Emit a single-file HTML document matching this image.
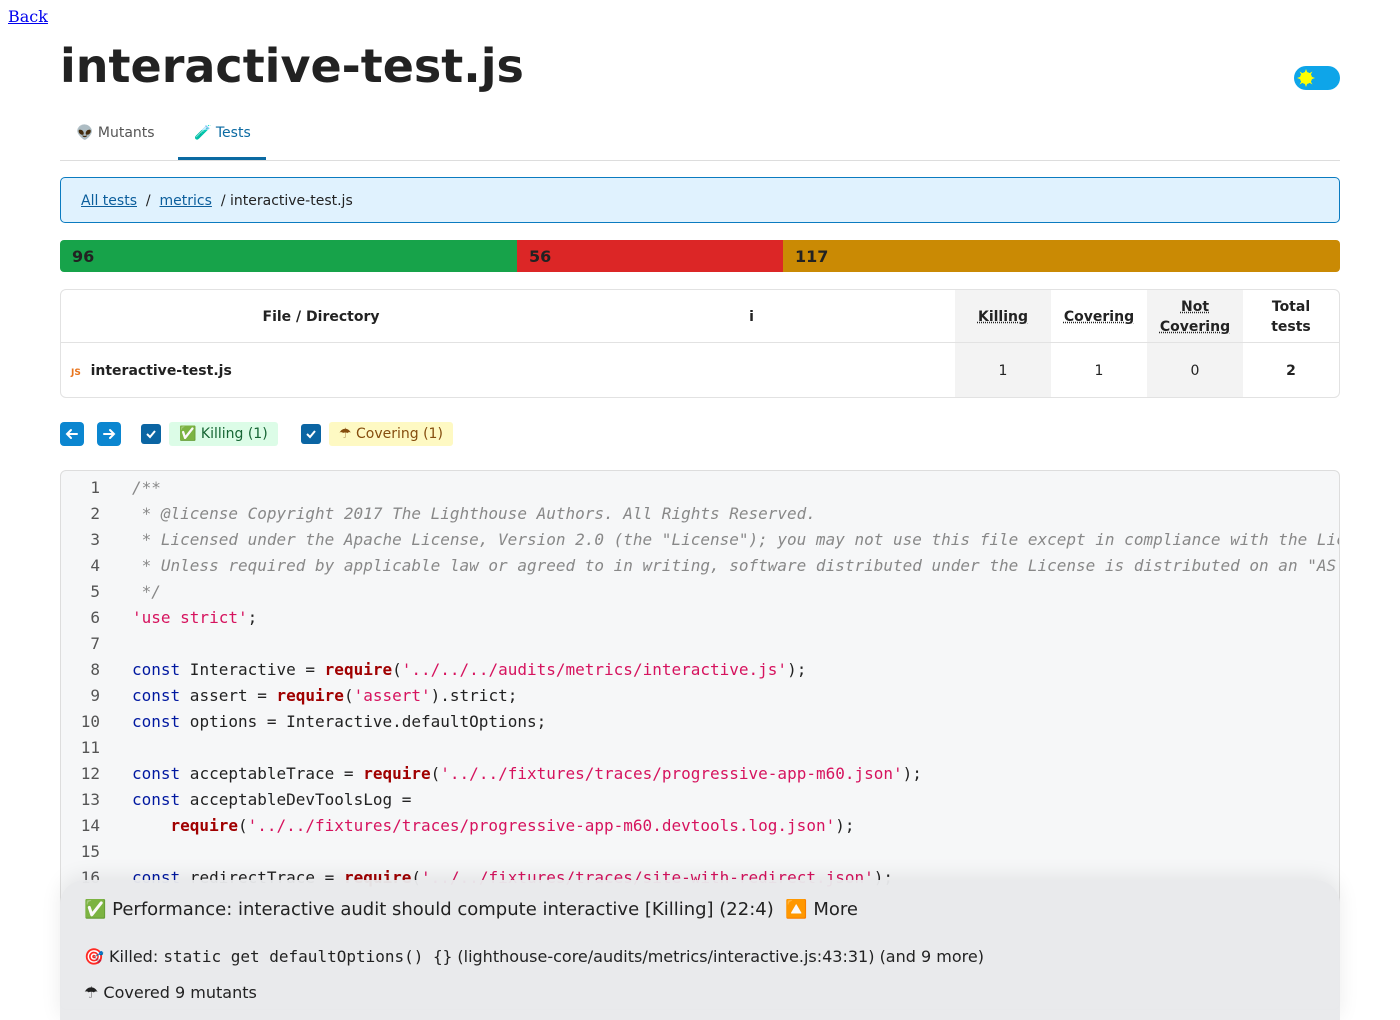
<!DOCTYPE html>
<html><head><meta charset="utf-8"><style>
*{box-sizing:border-box}
body{margin:0;font-family:"DejaVu Sans","Liberation Sans",sans-serif;color:#222;background:#fff;width:1400px;height:1000px;overflow:hidden;position:relative}
a{color:#0b5e9c}
.back{position:absolute;left:8px;top:7px;font-family:"DejaVu Serif","Liberation Serif",serif;font-size:16px;color:#00e}
h1{position:absolute;left:60px;top:39px;margin:0;font-size:46px;font-weight:bold;color:#222}
.toggle{position:absolute;left:1294px;top:66px;width:46px;height:24px;border-radius:12px;background:#0ea5e9}
.sun{position:absolute;left:3px;top:3px;width:18px;height:18px}
.tabs{position:absolute;left:60px;top:110px;width:1280px;height:51px;border-bottom:1px solid #ddd;font-size:14px}
.tab{position:absolute;top:15px}
.tabline{position:absolute;left:118px;top:47px;width:88px;height:3px;background:#0b6aa2}
.bc{position:absolute;left:60px;top:177px;width:1280px;height:46px;border:1px solid #0b7bc0;border-radius:5px;background:#e0f2fe;font-size:14px;padding:15px 20px 0}
.bar{position:absolute;top:240px;height:32px;font-weight:bold;font-size:16px;padding:7px 12px;color:#222}
table{position:absolute;left:60px;top:289px;width:1280px;border:1px solid #e2e2e2;border-radius:6px;border-collapse:separate;border-spacing:0;font-size:14px}
th,td{text-align:center;border-bottom:1px solid #e2e2e2}
th{height:53px;font-weight:bold;line-height:20px;padding-top:2px}
td{height:54px;border-bottom:none;padding-top:2px}
.g{background:#f3f3f3}
.u{text-decoration:underline dotted}
.btn{position:absolute;top:422px;width:24px;height:24px;border-radius:4px;background:#0b86d0}
.cb{position:absolute;top:424px;width:20px;height:20px;border-radius:3px;background:#0b65a3}
.pill{position:absolute;top:422px;height:24px;border-radius:3px;font-size:14px;padding:4px 10px 0}
.code{position:absolute;left:60px;top:470px;width:1280px;height:540px;border:1px solid #ddd;border-radius:6px;background:#f6f7f8;overflow:hidden;font-family:"DejaVu Sans Mono","Liberation Mono",monospace;font-size:16px;padding-top:4px}
.ln{display:flex;height:26px;line-height:26px;white-space:pre}
.n{width:39px;flex-shrink:0;text-align:right;color:#555}
.t{padding-left:32px;flex-shrink:0}
.c{color:#888;font-style:italic}.s{color:#d6135e}.k{color:#0018a0}.r{color:#a00000;font-weight:bold}
.pop{position:absolute;left:60px;top:880px;width:1280px;height:140px;border-radius:24px 24px 0 0;background:rgba(232,233,235,0.96);box-shadow:0 -4px 20px rgba(0,0,0,0.08);color:#222}
.pop div{position:absolute;left:24px;white-space:nowrap}
.m{font-family:"DejaVu Sans Mono",monospace;font-size:16px}
</style></head><body>
<a class="back" href="#">Back</a>
<h1>interactive-test.js</h1>
<div class="toggle"><svg class="sun" viewBox="0 0 18 18"><g fill="#ff0"><circle cx="9" cy="9" r="6"/><polygon points="9,0 10.5,4 7.5,4"/><polygon points="9,18 10.5,14 7.5,14"/><polygon points="0,9 4,7.5 4,10.5"/><polygon points="18,9 14,7.5 14,10.5"/><polygon points="2.5,2.5 6,4.5 4.5,6"/><polygon points="15.5,15.5 12,13.5 13.5,12"/><polygon points="15.5,2.5 13.5,6 12,4.5"/><polygon points="2.5,15.5 4.5,12 6,13.5"/></g></svg></div>
<div class="tabs"><span class="tab" style="left:16px;color:#555">👽 Mutants</span><span class="tab" style="left:134px;color:#0b6aa2">🧪 Tests</span><div class="tabline"></div></div>
<div class="bc"><a href="#">All tests</a> &nbsp;/ &nbsp;<a href="#">metrics</a> &nbsp;/ interactive-test.js</div>
<div class="bar" style="left:60px;width:457px;background:#17a34a;border-radius:4px 0 0 4px">96</div>
<div class="bar" style="left:517px;width:266px;background:#dc2626">56</div>
<div class="bar" style="left:783px;width:557px;background:#ca8a04;border-radius:0 4px 4px 0">117</div>
<table><tr><th style="width:520px">File / Directory</th><th style="width:374px;padding-right:34px">i</th><th class="g" style="width:96px"><span class="u">Killing</span></th><th style="width:96px"><span class="u">Covering</span></th><th class="g" style="width:96px"><span class="u">Not<br>Covering</span></th><th style="width:96px">Total<br>tests</th></tr>
<tr><td style="text-align:left;padding-left:10px;font-weight:bold"><span style="color:#e8741c;font-size:9px;font-weight:bold">JS</span>&nbsp; interactive-test.js</td><td></td><td class="g">1</td><td>1</td><td class="g">0</td><td style="font-weight:bold">2</td></tr></table>
<div class="btn" style="left:60px"><svg width="24" height="24"><path d="M17 12H7M11 8l-4 4 4 4" stroke="#fff" stroke-width="2" fill="none" stroke-linecap="round"/></svg></div>
<div class="btn" style="left:97px"><svg width="24" height="24"><path d="M7 12h10M13 8l4 4-4 4" stroke="#fff" stroke-width="2" fill="none" stroke-linecap="round"/></svg></div>
<div class="cb" style="left:141px"><svg width="20" height="20"><path d="M6 10l3 3 5-6" stroke="#fff" stroke-width="2" fill="none"/></svg></div>
<div class="pill" style="left:169px;background:#dcfce7;color:#166534">✅ Killing (1)</div>
<div class="cb" style="left:301px"><svg width="20" height="20"><path d="M6 10l3 3 5-6" stroke="#fff" stroke-width="2" fill="none"/></svg></div>
<div class="pill" style="left:329px;background:#fef9c3;color:#854d0e">☂ Covering (1)</div>
<div class="code">
<div class="ln"><span class="n">1</span><span class="t c">/**</span></div>
<div class="ln"><span class="n">2</span><span class="t c"> * @license Copyright 2017 The Lighthouse Authors. All Rights Reserved.</span></div>
<div class="ln"><span class="n">3</span><span class="t c"> * Licensed under the Apache License, Version 2.0 (the "License"); you may not use this file except in compliance with the License.</span></div>
<div class="ln"><span class="n">4</span><span class="t c"> * Unless required by applicable law or agreed to in writing, software distributed under the License is distributed on an "AS IS" BASIS</span></div>
<div class="ln"><span class="n">5</span><span class="t c"> */</span></div>
<div class="ln"><span class="n">6</span><span class="t"><span class="s">'use strict'</span>;</span></div>
<div class="ln"><span class="n">7</span><span class="t"></span></div>
<div class="ln"><span class="n">8</span><span class="t"><span class="k">const</span> Interactive = <span class="r">require</span>(<span class="s">'../../../audits/metrics/interactive.js'</span>);</span></div>
<div class="ln"><span class="n">9</span><span class="t"><span class="k">const</span> assert = <span class="r">require</span>(<span class="s">'assert'</span>).strict;</span></div>
<div class="ln"><span class="n">10</span><span class="t"><span class="k">const</span> options = Interactive.defaultOptions;</span></div>
<div class="ln"><span class="n">11</span><span class="t"></span></div>
<div class="ln"><span class="n">12</span><span class="t"><span class="k">const</span> acceptableTrace = <span class="r">require</span>(<span class="s">'../../fixtures/traces/progressive-app-m60.json'</span>);</span></div>
<div class="ln"><span class="n">13</span><span class="t"><span class="k">const</span> acceptableDevToolsLog =</span></div>
<div class="ln"><span class="n">14</span><span class="t">    <span class="r">require</span>(<span class="s">'../../fixtures/traces/progressive-app-m60.devtools.log.json'</span>);</span></div>
<div class="ln"><span class="n">15</span><span class="t"></span></div>
<div class="ln"><span class="n">16</span><span class="t"><span class="k">const</span> redirectTrace = <span class="r">require</span>(<span class="s">'../../fixtures/traces/site-with-redirect.json'</span>);</span></div>
</div>
<div class="pop">
<div style="top:19px;font-size:18px">✅ Performance: interactive audit should compute interactive [Killing] (22:4) &nbsp;🔼 More</div>
<div style="top:67px;font-size:16px">🎯 Killed: <span class="m">static get defaultOptions() {}</span> (lighthouse-core/audits/metrics/interactive.js:43:31) (and 9 more)</div>
<div style="top:103px;font-size:16px">☂ Covered 9 mutants</div>
</div>
</body></html>
